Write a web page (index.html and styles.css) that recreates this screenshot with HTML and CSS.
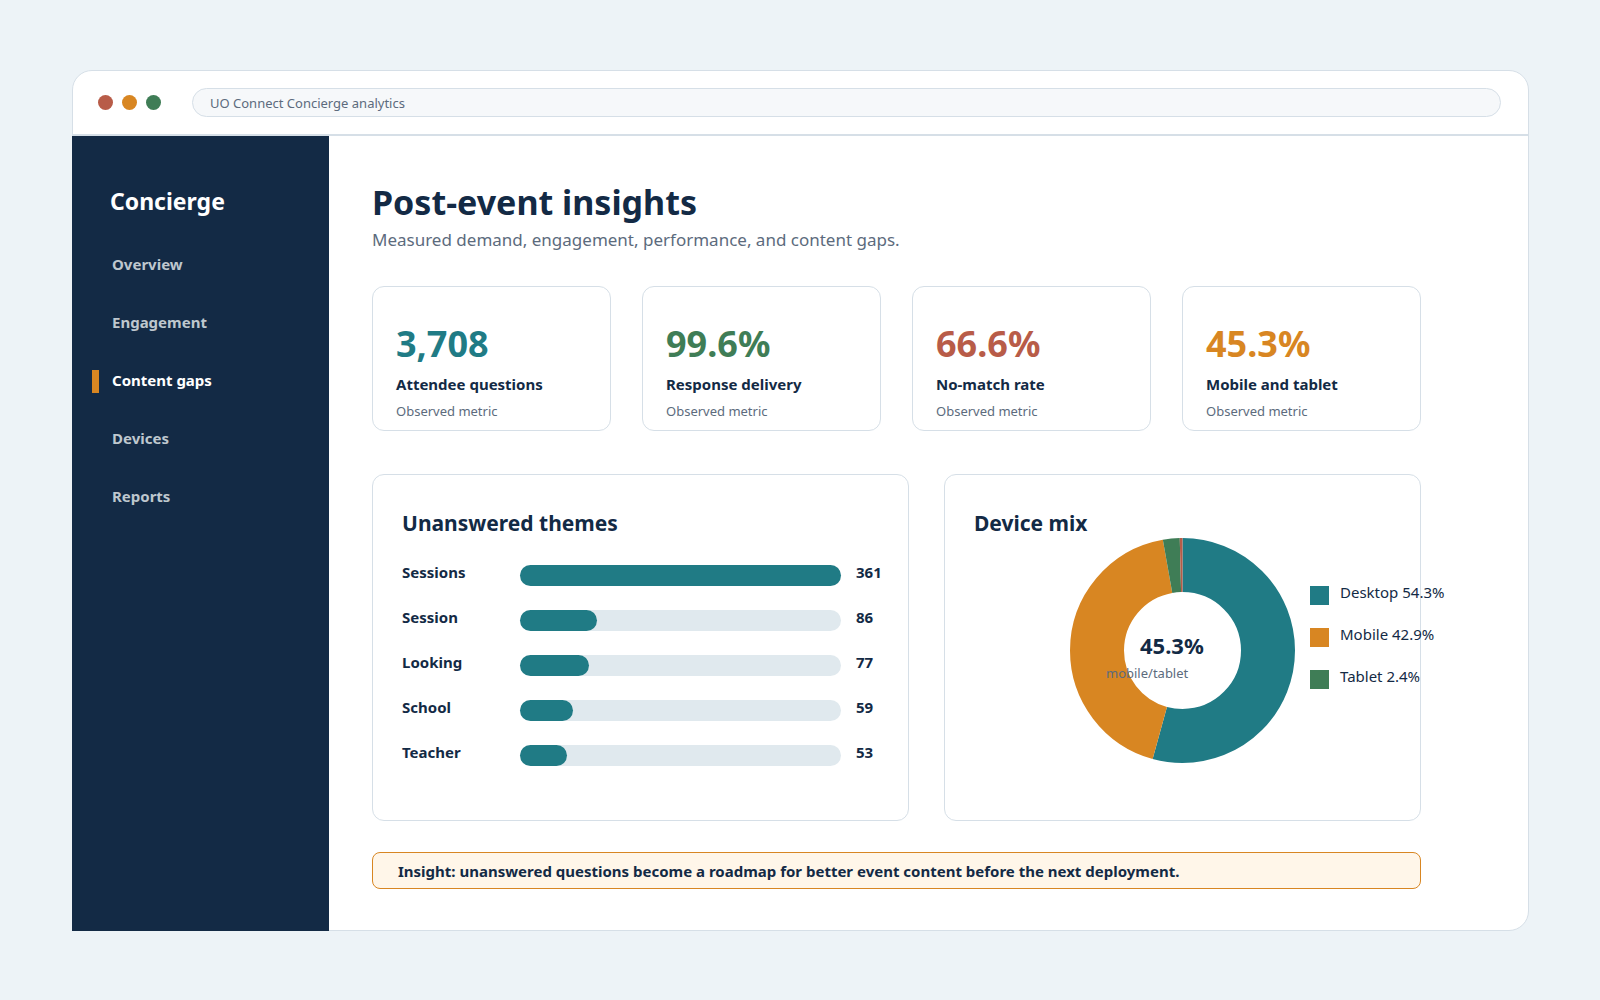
FILE: index.html
```html
<!DOCTYPE html>
<html lang="en">
<head>
<meta charset="utf-8">
<meta name="viewport" content="width=device-width, initial-scale=1">
<title>UO Connect Concierge analytics</title>
<link rel="stylesheet" href="styles.css">
</head>
<body>
<div class="window">
  <header class="topbar">
    <div class="dots">
      <span class="dot dot-red"></span>
      <span class="dot dot-orange"></span>
      <span class="dot dot-green"></span>
    </div>
    <input class="address" type="text" value="UO Connect Concierge analytics" aria-label="Address">
  </header>
  <div class="body">
    <aside class="sidebar">
      <div class="brand">Concierge</div>
      <nav class="nav">
        <a class="nav-link" href="#overview">Overview</a>
        <a class="nav-link" href="#engagement">Engagement</a>
        <a class="nav-link active" href="#gaps" aria-current="page">Content gaps</a>
        <a class="nav-link" href="#devices">Devices</a>
        <a class="nav-link" href="#reports">Reports</a>
      </nav>
    </aside>
    <main class="main">
      <h1 class="title">Post-event insights</h1>
      <p class="subtitle">Measured demand, engagement, performance, and content gaps.</p>

      <section class="metrics">
        <article class="card">
          <div class="figure teal">3,708</div>
          <div class="name">Attendee questions</div>
          <div class="note">Observed metric</div>
        </article>
        <article class="card">
          <div class="figure green">99.6%</div>
          <div class="name">Response delivery</div>
          <div class="note">Observed metric</div>
        </article>
        <article class="card">
          <div class="figure red">66.6%</div>
          <div class="name">No-match rate</div>
          <div class="note">Observed metric</div>
        </article>
        <article class="card">
          <div class="figure orange">45.3%</div>
          <div class="name">Mobile and tablet</div>
          <div class="note">Observed metric</div>
        </article>
      </section>

      <section class="panels">
        <article class="panel">
          <h2 class="panel-title">Unanswered themes</h2>
          <div class="bars">
            <div class="row"><span>Sessions</span><div class="track"><div class="fill" style="width:100%"></div></div><span>361</span></div>
            <div class="row"><span>Session</span><div class="track"><div class="fill" style="width:24%"></div></div><span>86</span></div>
            <div class="row"><span>Looking</span><div class="track"><div class="fill" style="width:21.5%"></div></div><span>77</span></div>
            <div class="row"><span>School</span><div class="track"><div class="fill" style="width:16.5%"></div></div><span>59</span></div>
            <div class="row"><span>Teacher</span><div class="track"><div class="fill" style="width:14.7%"></div></div><span>53</span></div>
          </div>
        </article>
        <article class="panel">
          <h2 class="panel-title">Device mix</h2>
          <div class="mix">
            <div class="donut">
              <svg width="225" height="225" viewBox="0 0 225 225" aria-hidden="true">
                <g fill="none" stroke-width="54" transform="rotate(-90 112.5 112.5)">
                  <circle cx="112.5" cy="112.5" r="85.5" pathLength="100" stroke="#207b85" stroke-dasharray="54.3 45.7"/>
                  <circle cx="112.5" cy="112.5" r="85.5" pathLength="100" stroke="#d88622" stroke-dasharray="42.9 57.1" stroke-dashoffset="-54.3"/>
                  <circle cx="112.5" cy="112.5" r="85.5" pathLength="100" stroke="#3f7d56" stroke-dasharray="2.4 97.6" stroke-dashoffset="-97.2"/>
                  <circle cx="112.5" cy="112.5" r="85.5" pathLength="100" stroke="#b85c48" stroke-dasharray="0.4 99.6" stroke-dashoffset="-99.6"/>
                </g>
              </svg>
              <span class="donut-value">45.3%</span>
              <span class="donut-note">mobile/tablet</span>
            </div>
            <ul class="legend">
              <li><span class="swatch dot-teal"></span>Desktop 54.3%</li>
              <li><span class="swatch dot-orange"></span>Mobile 42.9%</li>
              <li><span class="swatch dot-green"></span>Tablet 2.4%</li>
            </ul>
          </div>
        </article>
      </section>

      <p class="insight">Insight: unanswered questions become a roadmap for better event content before the next deployment.</p>
    </main>
  </div>
</div>
</body>
</html>
```
FILE: styles.css
```css
:root {
  --navy: #132a45;
  --muted: #5c6b7d;
  --line: #d6dfe7;
  --teal: #207b85;
  --green: #3f7d56;
  --red: #b85c48;
  --orange: #d88622;
}

* { box-sizing: border-box; }

body {
  margin: 0;
  min-height: 100vh;
  padding: 70px 71px 69px 72px;
  display: flex;
  background: #edf3f7;
  color: var(--navy);
  font-family: "Noto Sans", "Open Sans", sans-serif;
  font-size: 15px;
}

h1, h2, p, ul { margin: 0; padding: 0; }

.window {
  flex: 1;
  min-width: 0;
  display: flex;
  flex-direction: column;
  background: #fff;
  border: 1px solid var(--line);
  border-radius: 20px;
}

.topbar {
  display: flex;
  align-items: center;
  gap: 31px;
  padding: 17px 27px 17px 25px;
  border-bottom: 2px solid var(--line);
}

.dots { display: flex; gap: 9px; }
.dot { width: 15px; height: 15px; border-radius: 50%; }
.dot-teal { background: var(--teal); }
.dot-red { background: var(--red); }
.dot-orange { background: var(--orange); }
.dot-green { background: var(--green); }

.address {
  flex: 1;
  min-width: 0;
  height: 29px;
  padding: 0 17px;
  border: 1px solid var(--line);
  border-radius: 15px;
  background: #f6f8fa;
  color: var(--muted);
  font-family: inherit;
  font-size: 13px;
}

.body { flex: 1; display: flex; }

.sidebar {
  flex: none;
  width: 257px;
  margin: 0 0 -1px -1px;
  padding: 49px 20px 40px 38px;
  background: var(--navy);
  color: #fff;
}
.brand { font-size: 23px; line-height: 32px; font-weight: 700; }
.nav {
  display: flex;
  flex-direction: column;
  gap: 34px;
  margin-top: 35px;
  padding-left: 2px;
}
.nav-link {
  position: relative;
  color: #bec7ce;
  font-weight: 700;
  line-height: 24px;
  text-decoration: none;
}
.nav-link.active { color: #fff; }
.nav-link.active::before {
  content: "";
  position: absolute;
  left: -20px;
  top: 2px;
  width: 7px;
  height: 23px;
  background: var(--orange);
}

.main { flex: 1; min-width: 0; padding: 42px 107px 41px 43px; }
.title { font-size: 34px; line-height: 48px; font-weight: 700; }
.subtitle { margin-top: 2px; color: var(--muted); font-size: 17px; line-height: 24px; }

.metrics {
  display: grid;
  grid-template-columns: repeat(4, 1fr);
  gap: 31px;
  margin-top: 34px;
}
.card {
  display: flex;
  flex-direction: column;
  gap: 6px;
  padding: 33px 23px 8px;
  border: 1px solid var(--line);
  border-radius: 12px;
}
.figure { font-size: 36px; line-height: 48px; font-weight: 700; }
.name { font-weight: 700; line-height: 20px; }
.note { color: var(--muted); font-size: 13px; line-height: 22px; }
.teal { color: var(--teal); }
.green { color: var(--green); }
.red { color: var(--red); }
.orange { color: var(--orange); }

.panels {
  display: grid;
  grid-template-columns: 537fr 477fr;
  gap: 35px;
  margin-top: 43px;
}
.panel {
  min-width: 0;
  padding: 34px 25px 54px 29px;
  border: 1px solid var(--line);
  border-radius: 12px;
}
.panel-title { font-size: 21px; line-height: 28px; font-weight: 700; }

.bars {
  display: flex;
  flex-direction: column;
  gap: 24px;
  margin-top: 28px;
}
.row {
  display: grid;
  grid-template-columns: 103px 1fr 27px;
  column-gap: 15px;
  font-weight: 700;
  line-height: 14px;
}
.track { height: 21px; border-radius: 11px; background: #e0e9ee; }
.fill { height: 21px; border-radius: 11px; background: var(--teal); }

.mix {
  display: flex;
  gap: 15px;
  margin: 1px 0 0 96px;
}
.donut { position: relative; flex: none; }
.donut svg { display: block; }
.donut-value {
  position: absolute;
  left: 70px;
  top: 93px;
  font-size: 22px;
  line-height: 28px;
  font-weight: 700;
}
.donut-note {
  position: absolute;
  left: 36px;
  top: 125px;
  color: var(--muted);
  font-size: 13px;
  line-height: 20px;
}
.legend {
  display: flex;
  flex-direction: column;
  gap: 23px;
  margin-top: 48px;
  list-style: none;
}
.legend li { display: flex; gap: 11px; line-height: 12px; white-space: nowrap; }
.swatch { flex: none; width: 19px; height: 19px; }

.insight {
  margin-top: 31px;
  padding: 8px 25px 7px;
  border: 1px solid var(--orange);
  border-radius: 8px;
  background: #fff6e9;
  font-weight: 700;
  line-height: 20px;
}
```
